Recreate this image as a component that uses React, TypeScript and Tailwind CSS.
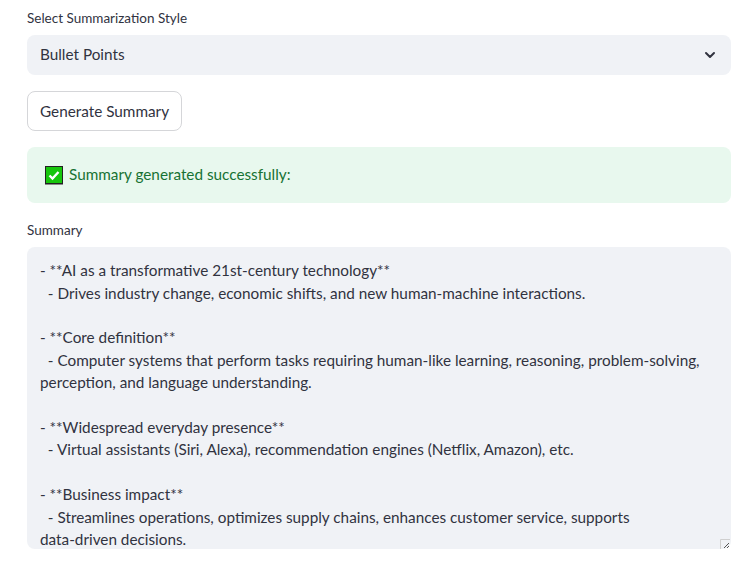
import { ChevronDown } from "lucide-react";

const summary = `- **AI as a transformative 21st-century technology**
  - Drives industry change, economic shifts, and new human-machine interactions.

- **Core definition**
  - Computer systems that perform tasks requiring human-like learning, reasoning, problem-solving, perception, and language understanding.

- **Widespread everyday presence**
  - Virtual assistants (Siri, Alexa), recommendation engines (Netflix, Amazon), etc.

- **Business impact**
  - Streamlines operations, optimizes supply chains, enhances customer service, supports
data-driven decisions.

- **Ethical concerns**
  - Bias, privacy, and job displacement.`;

export default function App() {
  return (
    <main className="flex flex-col w-[751px] h-[571px] bg-white px-[27px] pt-[10px] font-['Lato',sans-serif] text-[#31333f] overflow-hidden">
      <label className="text-[13.5px] leading-[16px] h-[25px]">Select Summarization Style</label>
      <div className="flex items-center justify-between h-[40px] w-[704px] rounded-lg bg-[#f0f2f6] px-[13px] text-[15.3px]">
        <span className="pb-[1px]">Bullet Points</span>
        <ChevronDown size={16} strokeWidth={3} />
      </div>
      <button className="mt-4 h-[40px] w-[155px] rounded-lg border border-[#d5d6d9] bg-white text-[15.3px]">
        Generate Summary
      </button>
      <div className="mt-4 flex items-center gap-[6px] h-[56px] w-[704px] rounded-lg bg-[#e8f8ee] pl-[18px] text-[15.3px] text-[#177233]">
        <svg width="18" height="19" viewBox="0 0 18 19">
          <rect x="0" y="0" width="18" height="18" fill="#222" />
          <rect x="0" y="18" width="18" height="1" fill="#8a8a8a" />
          <rect x="1" y="1" width="16" height="16" fill="#16c60c" />
          <path d="M4.5 9.5 L7.5 12.5 L13.5 6" fill="none" stroke="#fff" strokeWidth="2.4" />
        </svg>
        <span className="pb-[2px]">Summary generated successfully:</span>
      </div>
      <label className="mt-[19px] text-[13.5px] leading-[16px] h-[25px]">Summary</label>
      <div className="relative w-[704px] h-[302px]">
        <textarea
          readOnly
          value={summary}
          className="block w-full h-full rounded-lg bg-[#f0f2f6] px-[13px] pt-[12.2px] pb-[13px] text-[15.3px] leading-[22.4px] resize-none outline-none"
        />
        <svg className="absolute right-[1px] bottom-0" width="10" height="10" viewBox="0 0 10 10">
          <path d="M0.5 10V0.5H10" fill="none" stroke="#cfcfcf" />
          <path d="M4 9L9 4M7 9L9 7" fill="none" stroke="#555" />
        </svg>
      </div>
    </main>
  );
}
